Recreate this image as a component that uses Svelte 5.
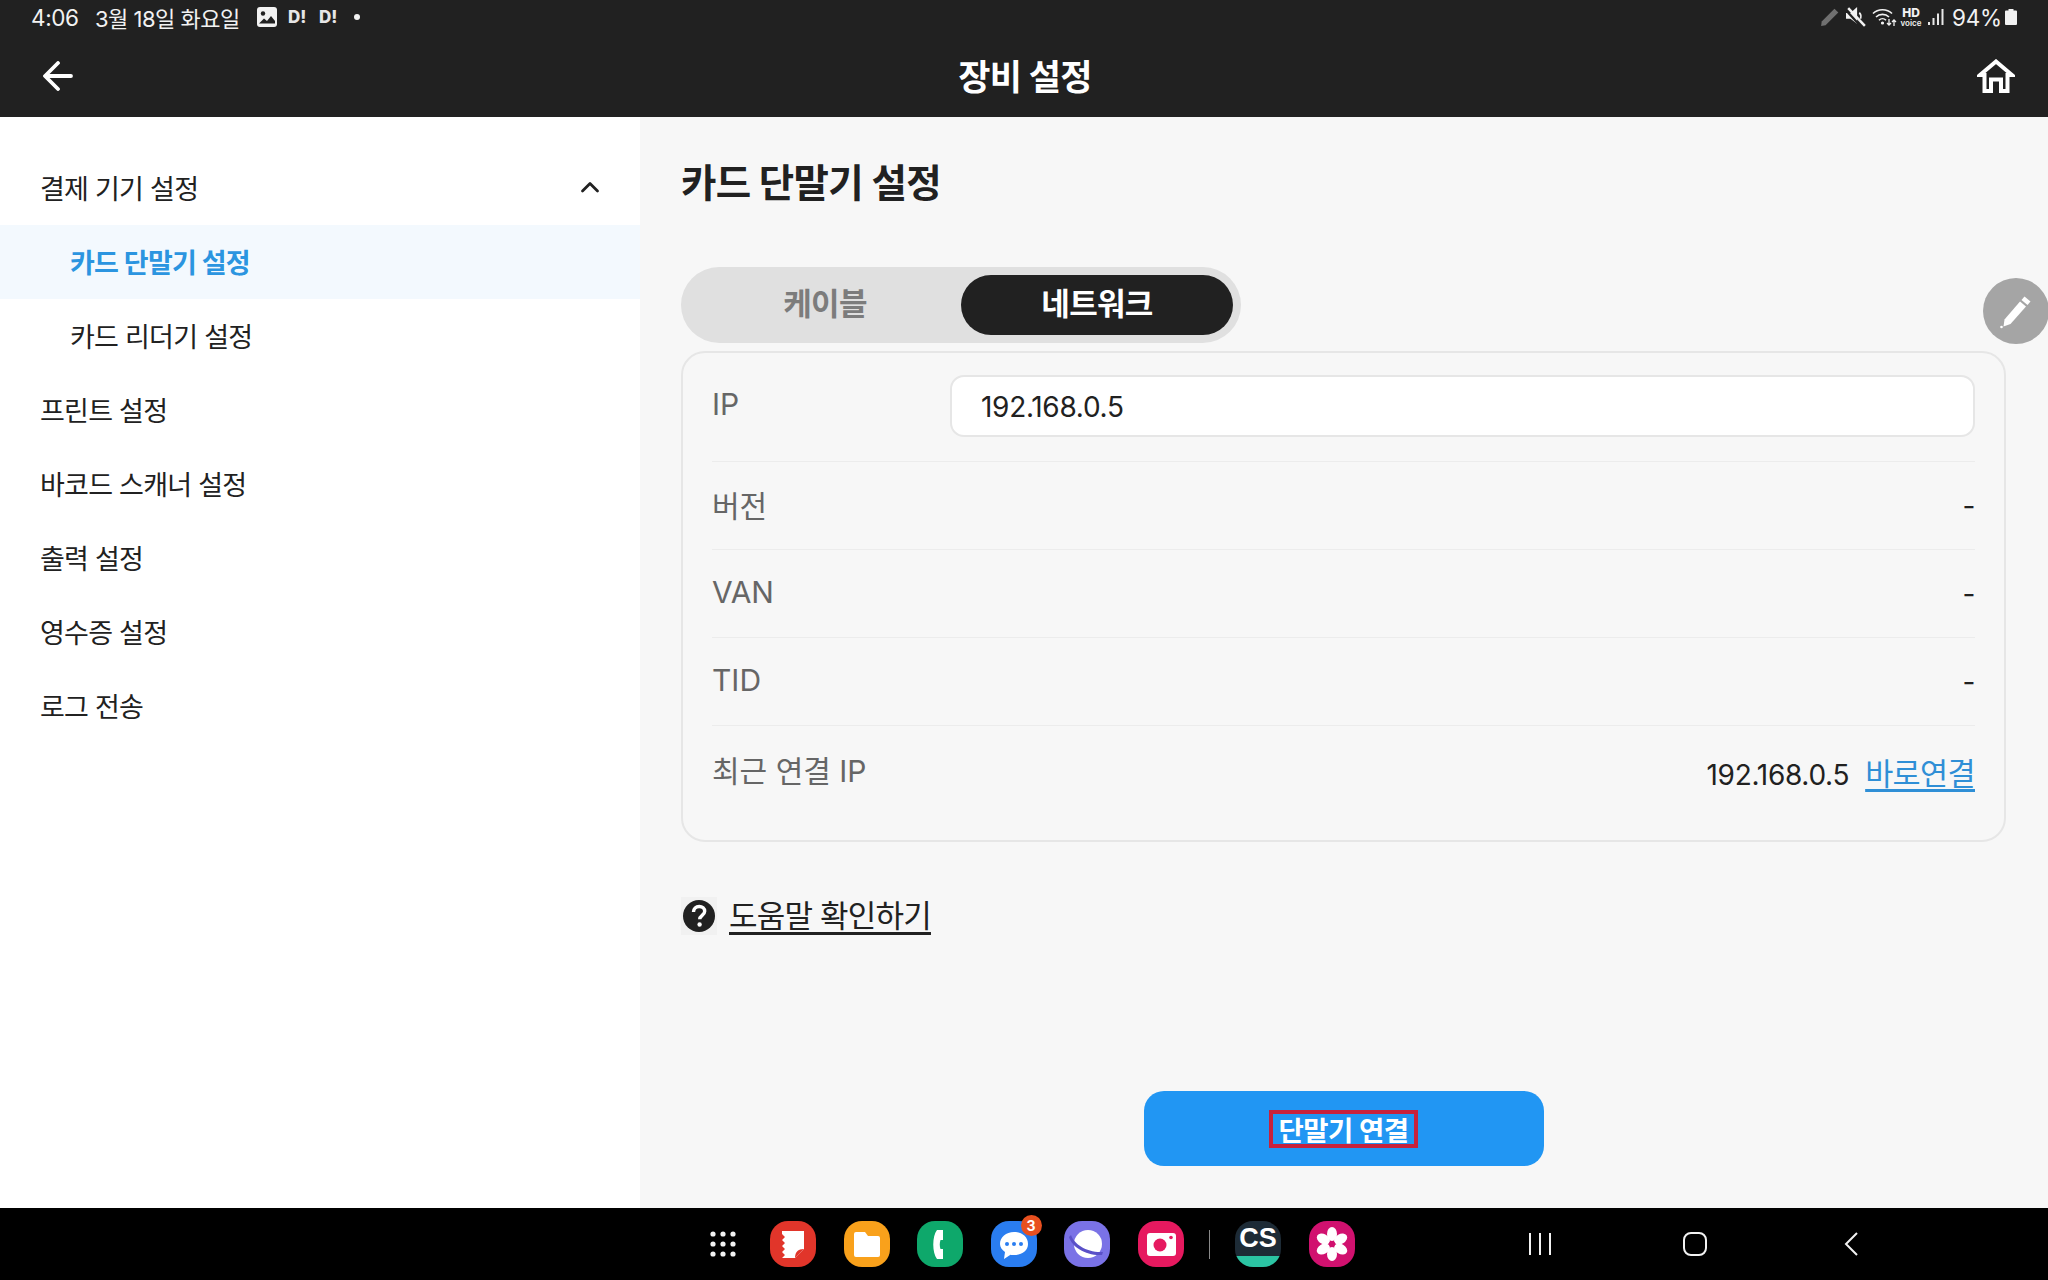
<script>
  const menu = [
    { label: '결제 기기 설정', open: true },
    { label: '카드 단말기 설정', sub: true, active: true },
    { label: '카드 리더기 설정', sub: true },
    { label: '프린트 설정' },
    { label: '바코드 스캐너 설정' },
    { label: '출력 설정' },
    { label: '영수증 설정' },
    { label: '로그 전송' }
  ];
  const infoRows = [
    { label: '버전', value: '-' },
    { label: 'VAN', value: '-' },
    { label: 'TID', value: '-' }
  ];
</script>

<div class="page">
  <div class="statusbar">
    <span class="time">4:06</span>
    <span class="date">3월 18일 화요일</span>
    <svg class="st-img" width="20" height="20" viewBox="0 0 20 20">
      <rect width="20" height="20" rx="3" fill="#f2f2f2" />
      <circle cx="6" cy="6.5" r="2.2" fill="#212121" />
      <path d="M2 16.5l5-5 3 2.5 4-5 4 5v2.5z" fill="#212121" />
    </svg>
    <span class="d-mark first">D!</span>
    <span class="d-mark">D!</span>
    <span class="dot"></span>

    <div class="st-right">
      <svg width="20" height="20" viewBox="0 0 18 18">
        <path d="M13 1.500l3.500 3.500L5 16.500 1 17l.5-4z" fill="#707070" />
      </svg>
      <svg class="st-mute" width="20" height="20" viewBox="0 0 18 18">
        <path d="M0 5.500h4L10 0v15L4 10.500H0z" fill="#f2f2f2" />
        <path d="M12 5c1.500 1.500 1.500 4 1 5.500" fill="none" stroke="#f2f2f2" stroke-width="1.500" />
        <path d="M0 3l13 14" stroke="#212121" stroke-width="2" />
        <path d="M2 1l15 16" stroke="#f2f2f2" stroke-width="2.200" />
      </svg>
      <svg class="st-wifi" width="25" height="20" viewBox="0 0 25 20" fill="none" stroke="#f2f2f2" stroke-width="1.6">
        <path d="M1 6.500C6 1.500 15 1.500 20 6.500" />
        <path d="M4 10c3.500-3.500 9.500-3.500 13 0" />
        <path d="M7 13.200c2-2 5-2 7 0" />
        <circle cx="10.500" cy="16" r="0.800" fill="#f2f2f2" />
        <path d="M17 12v6m-2-2l2 2 2-2M22 19v-6m-2 2l2-2 2 2" stroke-width="1.300" />
      </svg>
      <span class="hd"><b>HD</b><i>voice</i></span>
      <svg class="st-signal" width="16" height="18" viewBox="0 0 16 18" fill="#e8e8e8">
        <rect x="0" y="14" width="2" height="3" />
        <rect x="4.500" y="10" width="2" height="7" />
        <rect x="9" y="5.500" width="2" height="11.500" />
        <rect x="13.500" y="1" width="2" height="16" />
      </svg>
      <span class="battery-text">94%</span>
      <svg width="12" height="16" viewBox="0 0 12 16">
        <path d="M3.500 0h5v1.500H11a1 1 0 0 1 1 1V15a1 1 0 0 1-1 1H1a1 1 0 0 1-1-1V2.500a1 1 0 0 1 1-1h2.500z" fill="#f2f2f2" />
      </svg>
    </div>
  </div>

  <header class="topbar">
    <svg class="back" width="30" height="30" viewBox="0 0 30 30" fill="none" stroke="#fff" stroke-width="3.800" stroke-linecap="round" stroke-linejoin="round">
      <path d="M28 15H3M15 2L2 15l13 13" />
    </svg>
    <h1>장비 설정</h1>
    <svg class="home" width="38" height="34" viewBox="0 0 38 34" fill="none" stroke="#fff" stroke-width="4" stroke-linejoin="miter">
      <path d="M3 16L19 2.500 35 16h-4.500v16H24V20.500H14V32H7.500V16z" />
    </svg>
  </header>

  <div class="body">
    <nav class="sidebar">
      {#each menu as item}
        <div class="menu-item" class:sub={item.sub} class:active={item.active}>
          <span>{item.label}</span>
          {#if item.open}
            <svg width="20" height="12" viewBox="0 0 20 12" fill="none" stroke="#212121" stroke-width="2.800" stroke-linecap="round" stroke-linejoin="round">
              <path d="M2.500 10L10 2.500 17.500 10" />
            </svg>
          {/if}
        </div>
      {/each}
    </nav>

    <main class="content">
      <h2>카드 단말기 설정</h2>

      <div class="segment">
        <div class="seg">케이블</div>
        <div class="seg on">네트워크</div>
      </div>

      <section class="card">
        <div class="row ip-row">
          <span class="label">IP</span>
          <div class="input">192.168.0.5</div>
        </div>
        {#each infoRows as row}
          <div class="row">
            <span class="label">{row.label}</span>
            <span class="value">{row.value}</span>
          </div>
        {/each}
        <div class="row last">
          <span class="label">최근 연결 IP</span>
          <span class="recent">
            <span class="value ip-value">192.168.0.5</span>
            <span class="link">바로연결</span>
          </span>
        </div>
      </section>

      <div class="help">
        <span class="help-icon">
          <svg width="34" height="34" viewBox="0 0 34 34">
            <circle cx="17" cy="17" r="16" fill="#212121" />
            <path d="M11.500 13c0-3.500 2.500-5.500 5.700-5.500s5.500 2 5.500 4.800c0 4-5 4.200-5 8" fill="none" stroke="#fff" stroke-width="3.400" />
            <circle cx="17.600" cy="25.500" r="2.200" fill="#fff" />
          </svg>
        </span>
        <span class="help-text">도움말 확인하기</span>
      </div>

      <button class="connect"><span class="connect-text">단말기 연결</span></button>

      <div class="fab">
        <svg width="36" height="36" viewBox="0 0 36 36">
          <path d="M26.500 3.500l6 5-3 3.500-6-5z" fill="#fff" />
          <path d="M22 8.500l6 5-15.500 17.500-7 2.500 1-7z" fill="#fff" />
          <circle cx="3.500" cy="34" r="1.300" fill="#fff" />
        </svg>
      </div>
    </main>
  </div>

  <footer class="dock">
    <svg class="grid-icon" width="26" height="26" viewBox="0 0 26 26" fill="#f2f2f2">
      {#each [3, 13, 23] as y}
        {#each [3, 13, 23] as x}
          <circle cx={x} cy={y} r="2.600" />
        {/each}
      {/each}
    </svg>

    <svg class="app" viewBox="0 0 46 46">
      <rect width="46" height="46" rx="18" fill="#e1352a" />
      <path d="M12 10h22v18l-9 9H12l3-3-3-3 3-3-3-3 3-3-3-3 3-3-3-3z" fill="#fff" />
      <path d="M25 37c0-6 3-9 9-9z" fill="#e1352a" />
    </svg>
    <svg class="app" viewBox="0 0 46 46">
      <rect width="46" height="46" rx="18" fill="#f9a11b" />
      <path d="M10 13a2 2 0 0 1 2-2h9l3 4h10a2 2 0 0 1 2 2v17a2 2 0 0 1-2 2H12a2 2 0 0 1-2-2z" fill="#fff" />
    </svg>
    <svg class="app" viewBox="0 0 46 46">
      <rect width="46" height="46" rx="18" fill="#0ea86b" />
      <path d="M20 9h6v10h-2.500c-1 3-1 6 0 9H26v10h-6c-5-6-5-23 0-29z" fill="#fff" />
    </svg>
    <div class="app-wrap">
      <svg class="app" viewBox="0 0 46 46">
        <rect width="46" height="46" rx="18" fill="#2a7df0" />
        <path d="M23 11c8 0 14 5 14 12s-6 11-14 11c-1.500 0-2.500 0-3.500-.300L13 38l1-7c-3-2-5-5-5-8 0-7 6-12 14-12z" fill="#fff" />
        <circle cx="16" cy="23" r="2" fill="#2a7df0" />
        <circle cx="23" cy="23" r="2" fill="#2a7df0" />
        <circle cx="30" cy="23" r="2" fill="#2a7df0" />
      </svg>
      <span class="badge">3</span>
    </div>
    <svg class="app" viewBox="0 0 46 46">
      <rect width="46" height="46" rx="18" fill="#7a72e6" />
      <circle cx="24" cy="23" r="14" fill="#fff" />
      <path d="M7 14c3 9 16 18 32 17l-1 3C22 35 8 26 5 16z" fill="#5a50c8" />
    </svg>
    <svg class="app" viewBox="0 0 46 46">
      <rect width="46" height="46" rx="18" fill="#e6195f" />
      <rect x="9" y="12" width="29" height="23" rx="3" fill="#fff" />
      <circle cx="22" cy="24" r="6.500" fill="#e6195f" />
      <circle cx="33" cy="16.500" r="1.800" fill="#e6195f" />
    </svg>
    <span class="dock-sep"></span>
    <div class="app-cs">
      <span>CS</span>
    </div>
    <svg class="app" viewBox="0 0 46 46">
      <rect width="46" height="46" rx="18" fill="#d1116f" />
      {#each [0, 60, 120, 180, 240, 300] as angle}
        <ellipse cx="23" cy="13" rx="5" ry="7" fill="#fff" transform="rotate({angle} 23 23)" />
      {/each}
      <circle cx="23" cy="23" r="3" fill="#d1116f" />
    </svg>

    <div class="navkeys">
      <svg width="22" height="24" viewBox="0 0 22 24" stroke="#f2f2f2" stroke-width="2">
        <path d="M1 1v22M11 1v22M21 1v22" />
      </svg>
      <svg class="nav-home" width="24" height="24" viewBox="0 0 24 24" fill="none" stroke="#f2f2f2" stroke-width="2">
        <rect x="1" y="1" width="22" height="22" rx="7" />
      </svg>
      <svg class="nav-back" width="14" height="24" viewBox="0 0 14 24" fill="none" stroke="#f2f2f2" stroke-width="2">
        <path d="M13 1L2 12l11 11" />
      </svg>
    </div>
  </footer>
</div>

<style>
  :global(body) {
    margin: 0;
    background: #f7f7f7;
  }

  .page {
    display: flex;
    flex-direction: column;
    width: 2048px;
    height: 1280px;
    overflow: hidden;
    font-family: Inter, "Noto Sans CJK KR", sans-serif;
    color: #212121;
  }

  /* status bar */
  .statusbar {
    display: flex;
    align-items: center;
    height: 34px;
    padding: 0 31px 0 31px;
    background: #212121;
    color: #f2f2f2;
    font-size: 22.500px;
    box-sizing: border-box;
  }

  .time {
    width: 64px;
    letter-spacing: -0.4px;
  }

  .date {
    width: 162px;
    font-size: 22px;
    letter-spacing: -0.5px;
    white-space: nowrap;
  }

  .d-mark {
    margin-left: 12px;
    font-size: 17px;
    font-weight: 800;
    width: 19px;
    color: #e6e6e6;
  }

  .d-mark.first {
    margin-left: 11px;
  }

  .dot {
    width: 6px;
    height: 6px;
    margin-left: 16px;
    border-radius: 50%;
    background: #f2f2f2;
  }

  .st-right {
    display: flex;
    align-items: center;
    margin-left: auto;
  }

  .st-mute {
    margin-left: 6px;
  }

  .st-wifi {
    margin-left: 6px;
  }

  .hd {
    display: flex;
    flex-direction: column;
    align-items: center;
    margin-left: 4px;
    width: 20px;
    line-height: 1;
  }

  .hd b {
    font-size: 12px;
    font-weight: 800;
  }

  .hd i {
    font-size: 8px;
    font-style: normal;
    font-weight: 600;
  }

  .st-signal {
    margin-left: 7px;
  }

  .battery-text {
    margin-left: 8px;
    margin-right: 3px;
    letter-spacing: -0.2px;
  }

  /* title bar */
  .topbar {
    display: flex;
    align-items: center;
    justify-content: space-between;
    height: 83px;
    padding: 0 33px 0 43px;
    background: #212121;
    flex: none;
    box-sizing: border-box;
  }

  .topbar h1 {
    margin: 0 0 2px;
    font-size: 35px;
    font-weight: 700;
    color: #fff;
    letter-spacing: -0.7px;
  }

  .body {
    display: flex;
    flex: 1;
    min-height: 0;
  }

  /* left menu */
  .sidebar {
    width: 640px;
    padding-top: 34px;
    background: #fff;
    flex: none;
    box-sizing: border-box;
  }

  .menu-item {
    display: flex;
    align-items: center;
    justify-content: space-between;
    height: 74px;
    padding: 0 40px 2px;
    font-size: 27px;
    letter-spacing: -0.75px;
    box-sizing: border-box;
  }

  .menu-item.sub {
    padding-left: 70px;
  }

  .menu-item.active {
    background: #f3f9fe;
    color: #2b95e0;
    font-weight: 700;
  }

  /* right side */
  .content {
    position: relative;
    display: flex;
    flex-direction: column;
    flex: 1;
    padding: 42px 42px 42px 41px;
    background: #f7f7f7;
    box-sizing: border-box;
  }

  .content h2 {
    margin: 0 0 60px;
    font-size: 38.500px;
    line-height: 48px;
    font-weight: 700;
    letter-spacing: -0.7px;
  }

  .segment {
    display: grid;
    grid-template-columns: 272px 272px;
    width: 560px;
    height: 76px;
    padding: 8px;
    margin-bottom: 8px;
    background: #e0e0e0;
    border-radius: 38px;
    box-sizing: border-box;
  }

  .seg {
    display: flex;
    align-items: center;
    justify-content: center;
    padding-bottom: 7px;
    font-size: 31px;
    font-weight: 700;
    color: #7c7c7c;
    border-radius: 30px;
    letter-spacing: -0.7px;
    box-sizing: border-box;
  }

  .seg.on {
    background: #212121;
    color: #fff;
  }

  .card {
    height: 491px;
    padding: 0 29px;
    border: 2px solid #e6e6e6;
    border-radius: 24px;
    box-sizing: border-box;
  }

  .row {
    display: flex;
    align-items: center;
    justify-content: space-between;
    height: 88px;
    border-bottom: 1px solid #ececec;
    box-sizing: border-box;
  }

  .row.ip-row {
    height: 109px;
    padding-bottom: 3px;
  }

  .row.last {
    border-bottom: 0;
  }

  .label {
    padding-bottom: 3px;
    font-size: 30px;
    color: #666;
    letter-spacing: 0;
  }

  .value {
    font-size: 28px;
    color: #212121;
    letter-spacing: -0.3px;
  }

  .input {
    display: flex;
    align-items: center;
    width: 1025px;
    height: 62px;
    padding: 3px 29px 0;
    background: #fff;
    border: 2px solid #e6e6e6;
    border-radius: 14px;
    font-size: 28px;
    letter-spacing: -0.3px;
    box-sizing: border-box;
  }

  .recent {
    display: flex;
    align-items: center;
    gap: 16px;
    padding-top: 4px;
  }

  .ip-value {
    padding-top: 6px;
  }

  .link {
    font-size: 30.500px;
    color: #2f8fd6;
    text-decoration: underline;
    text-underline-offset: 4px;
    letter-spacing: -0.6px;
  }

  .help {
    display: flex;
    align-items: center;
    gap: 12px;
    height: 44px;
    margin-top: 52px;
    font-size: 31px;
    letter-spacing: -0.8px;
  }

  .help-icon {
    display: flex;
    align-items: center;
    justify-content: center;
    width: 36px;
    height: 38px;
    background: #f1f1f1;
  }

  .help-text {
    padding-bottom: 5px;
    text-decoration: underline;
    text-underline-offset: 5px;
  }

  .connect {
    display: flex;
    align-items: center;
    justify-content: center;
    align-self: center;
    width: 400px;
    height: 75px;
    margin-top: auto;
    padding: 0;
    background: #2196f3;
    border: 0;
    border-radius: 20px;
    color: #fff;
    font-family: inherit;
    font-size: 27.500px;
    font-weight: 700;
  }

  /* red box is part of the screenshot, it marks the label */
  .connect-text {
    display: flex;
    align-items: center;
    justify-content: center;
    width: 149px;
    height: 38px;
    border: 4px solid #c8213c;
    box-sizing: border-box;
    white-space: nowrap;
    letter-spacing: -0.5px;
  }

  .fab {
    position: absolute;
    top: 161px;
    left: 1343px;
    display: flex;
    align-items: center;
    justify-content: center;
    width: 66px;
    height: 66px;
    background: #a5a5a5;
    border-radius: 50%;
  }

  /* bottom bar */
  .dock {
    display: flex;
    align-items: center;
    height: 72px;
    padding-left: 710px;
    background: #000;
    flex: none;
    box-sizing: border-box;
  }

  .grid-icon {
    margin-right: 34px;
  }

  .app {
    display: block;
    width: 46px;
    height: 46px;
    margin-right: 27.500px;
    flex: none;
  }

  .app-wrap {
    position: relative;
  }

  .badge {
    position: absolute;
    top: -6px;
    left: 30px;
    width: 21px;
    height: 21px;
    background: #e8501f;
    border-radius: 50%;
    color: #fff;
    font-size: 14px;
    font-weight: 700;
    line-height: 21px;
    text-align: center;
  }

  .dock-sep {
    width: 1px;
    height: 29px;
    margin-right: 25px;
    margin-left: -2px;
    background: #8a8a8a;
  }

  .app-cs {
    display: flex;
    justify-content: center;
    width: 46px;
    height: 46px;
    margin-right: 28px;
    background: linear-gradient(#1d2b36 76%, #2bc4a3 76%);
    border-radius: 18px;
    color: #fff;
    font-family: "Liberation Sans", sans-serif;
    font-size: 27px;
    font-weight: 700;
    line-height: 35px;
    flex: none;
  }

  .navkeys {
    display: flex;
    align-items: center;
    margin-left: 146px;
  }

  .nav-home {
    margin-left: 132px;
  }

  .nav-back {
    margin-left: 137px;
  }
</style>
